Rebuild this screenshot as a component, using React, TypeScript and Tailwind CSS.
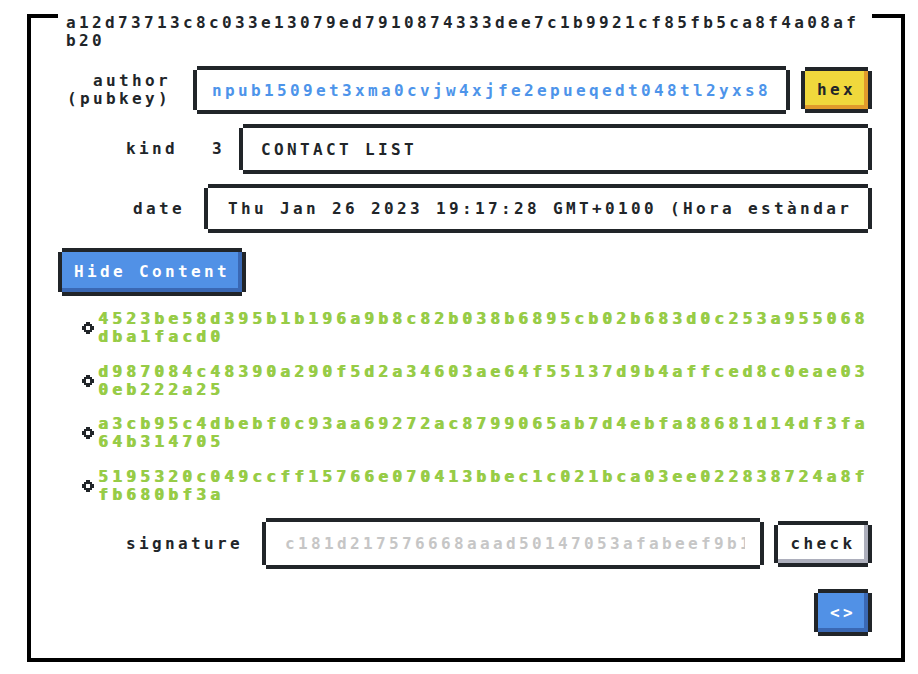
const edge =
  "shadow-[0_-4px_0_0_#212529,0_4px_0_0_#212529,-4px_0_0_0_#212529,4px_0_0_0_#212529]";

const contacts = [
  "4523be58d395b1b196a9b8c82b038b6895cb02b683d0c253a955068dba1facd0",
  "d987084c48390a290f5d2a34603ae64f55137d9b4affced8c0eae030eb222a25",
  "a3cb95c4dbebf0c93aa69272ac8799065ab7d4ebfa88681d14df3fa64b314705",
  "5195320c049ccff15766e070413bbec1c021bca03ee022838724a8ffb680bf3a",
];

function Bullet() {
  // pixel ring, 2px grid
  return (
    <svg width="12" height="12" viewBox="0 0 12 12" className="flex-none" fill="#212529">
      <rect x="4" y="0" width="4" height="2" />
      <rect x="2" y="2" width="8" height="2" />
      <rect x="0" y="4" width="4" height="4" />
      <rect x="8" y="4" width="4" height="4" />
      <rect x="2" y="8" width="8" height="2" />
      <rect x="4" y="10" width="4" height="2" />
    </svg>
  );
}

export default function App() {
  return (
    <div className="min-h-screen bg-white pt-[14px] pl-[27px] font-['DejaVu_Sans_Mono',monospace] text-[16px] leading-[18px] font-bold tracking-[3.37px] text-[#212529]">
      <div className="w-[878px] border-4 border-black pl-[31px] pr-[33px] pb-[26px]">
        <div className="-mt-[4px] -ml-[4px] w-[814px] bg-white px-2 break-all">
          a12d73713c8c033e13079ed7910874333dee7c1b9921cf85fb5ca8f4a08afb20
        </div>

        <div className="mt-[20px] flex items-center">
          <label className="w-[109px] flex-none text-right">
            author
            <br />
            (pubkey)
          </label>
          <input
            readOnly
            value="npub1509et3xma0cvjw4xjfe2epueqedt048tl2yxs8kwzhq9dfpwvgqs3y7jnd"
            className={`ml-[26px] h-[40px] min-w-0 flex-1 bg-white pl-[15px] pr-[16px] text-[#4d94ea] outline-none ${edge}`}
          />
          <button className="ml-[19px] h-[38px] w-[63px] flex-none bg-[#f0d83c] text-center shadow-[inset_-4px_-4px_#e09a2c,0_-4px_0_0_#212529,0_4px_0_0_#212529,-4px_0_0_0_#212529,4px_0_0_0_#212529]">
            hex
          </button>
        </div>

        <div className="mt-[18px] flex items-center">
          <label className="w-[116px] flex-none text-right">kind</label>
          <span className="ml-[34px] w-[13px] flex-none">3</span>
          <input
            readOnly
            value="CONTACT LIST"
            className={`ml-[18px] h-[42px] min-w-0 flex-1 bg-white pl-[18px] pr-[16px] outline-none ${edge}`}
          />
        </div>

        <div className="mt-[18px] flex items-center">
          <label className="w-[123px] flex-none text-right">date</label>
          <input
            readOnly
            value="Thu Jan 26 2023 19:17:28 GMT+0100 (Hora estàndar d’Europa central)"
            className={`ml-[23px] h-[41px] min-w-0 flex-1 bg-white pl-[20px] pr-[16px] outline-none ${edge}`}
          />
        </div>

        <div className="mt-[23px]">
          <button className="h-[40px] w-[180px] bg-[#5191e6] text-center text-white shadow-[inset_-4px_-4px_#3a68b4,0_-4px_0_0_#212529,0_4px_0_0_#212529,-4px_0_0_0_#212529,4px_0_0_0_#212529]">
            Hide Content
          </button>
        </div>

        <ul className="mt-[18px] flex flex-col gap-[16.5px]">
          {contacts.map((c) => (
            <li key={c} className="ml-[20px] flex items-center">
              <Bullet />
              <span className="ml-[4px] w-[776px] flex-none break-all tracking-[4.37px] text-[#97cc47] [text-shadow:1px_0_0_#97cc47]">
                {c}
              </span>
            </li>
          ))}
        </ul>

        <div className="mt-[18.5px] flex items-center">
          <label className="w-[181px] flex-none text-right">signature</label>
          <input
            readOnly
            value="c181d217576668aaad50147053afabeef9b1e0c2d4a96e3f8b07c51a92d6e4f0387bc9a2e15d46f0a8c3b7e92d1f05a6c48e3b9d27f61a05c8e4b3d9f2a7160c"
            className={`ml-[23px] h-[43px] min-w-0 flex-1 bg-white pl-[19px] pr-[15px] text-[#c6c6c6] outline-none ${edge}`}
          />
          <button className="ml-[18px] h-[38px] w-[90px] flex-none bg-white text-center shadow-[inset_-4px_-4px_#adafbc,0_-4px_0_0_#212529,0_4px_0_0_#212529,-4px_0_0_0_#212529,4px_0_0_0_#212529]">
            check
          </button>
        </div>

        <div className="mt-[28px] flex justify-end">
          <button className="h-[39px] w-[50px] bg-[#5191e6] text-center text-white shadow-[inset_-4px_-4px_#3a68b4,0_-4px_0_0_#212529,0_4px_0_0_#212529,-4px_0_0_0_#212529,4px_0_0_0_#212529]">
            &lt;&gt;
          </button>
        </div>
      </div>
    </div>
  );
}
